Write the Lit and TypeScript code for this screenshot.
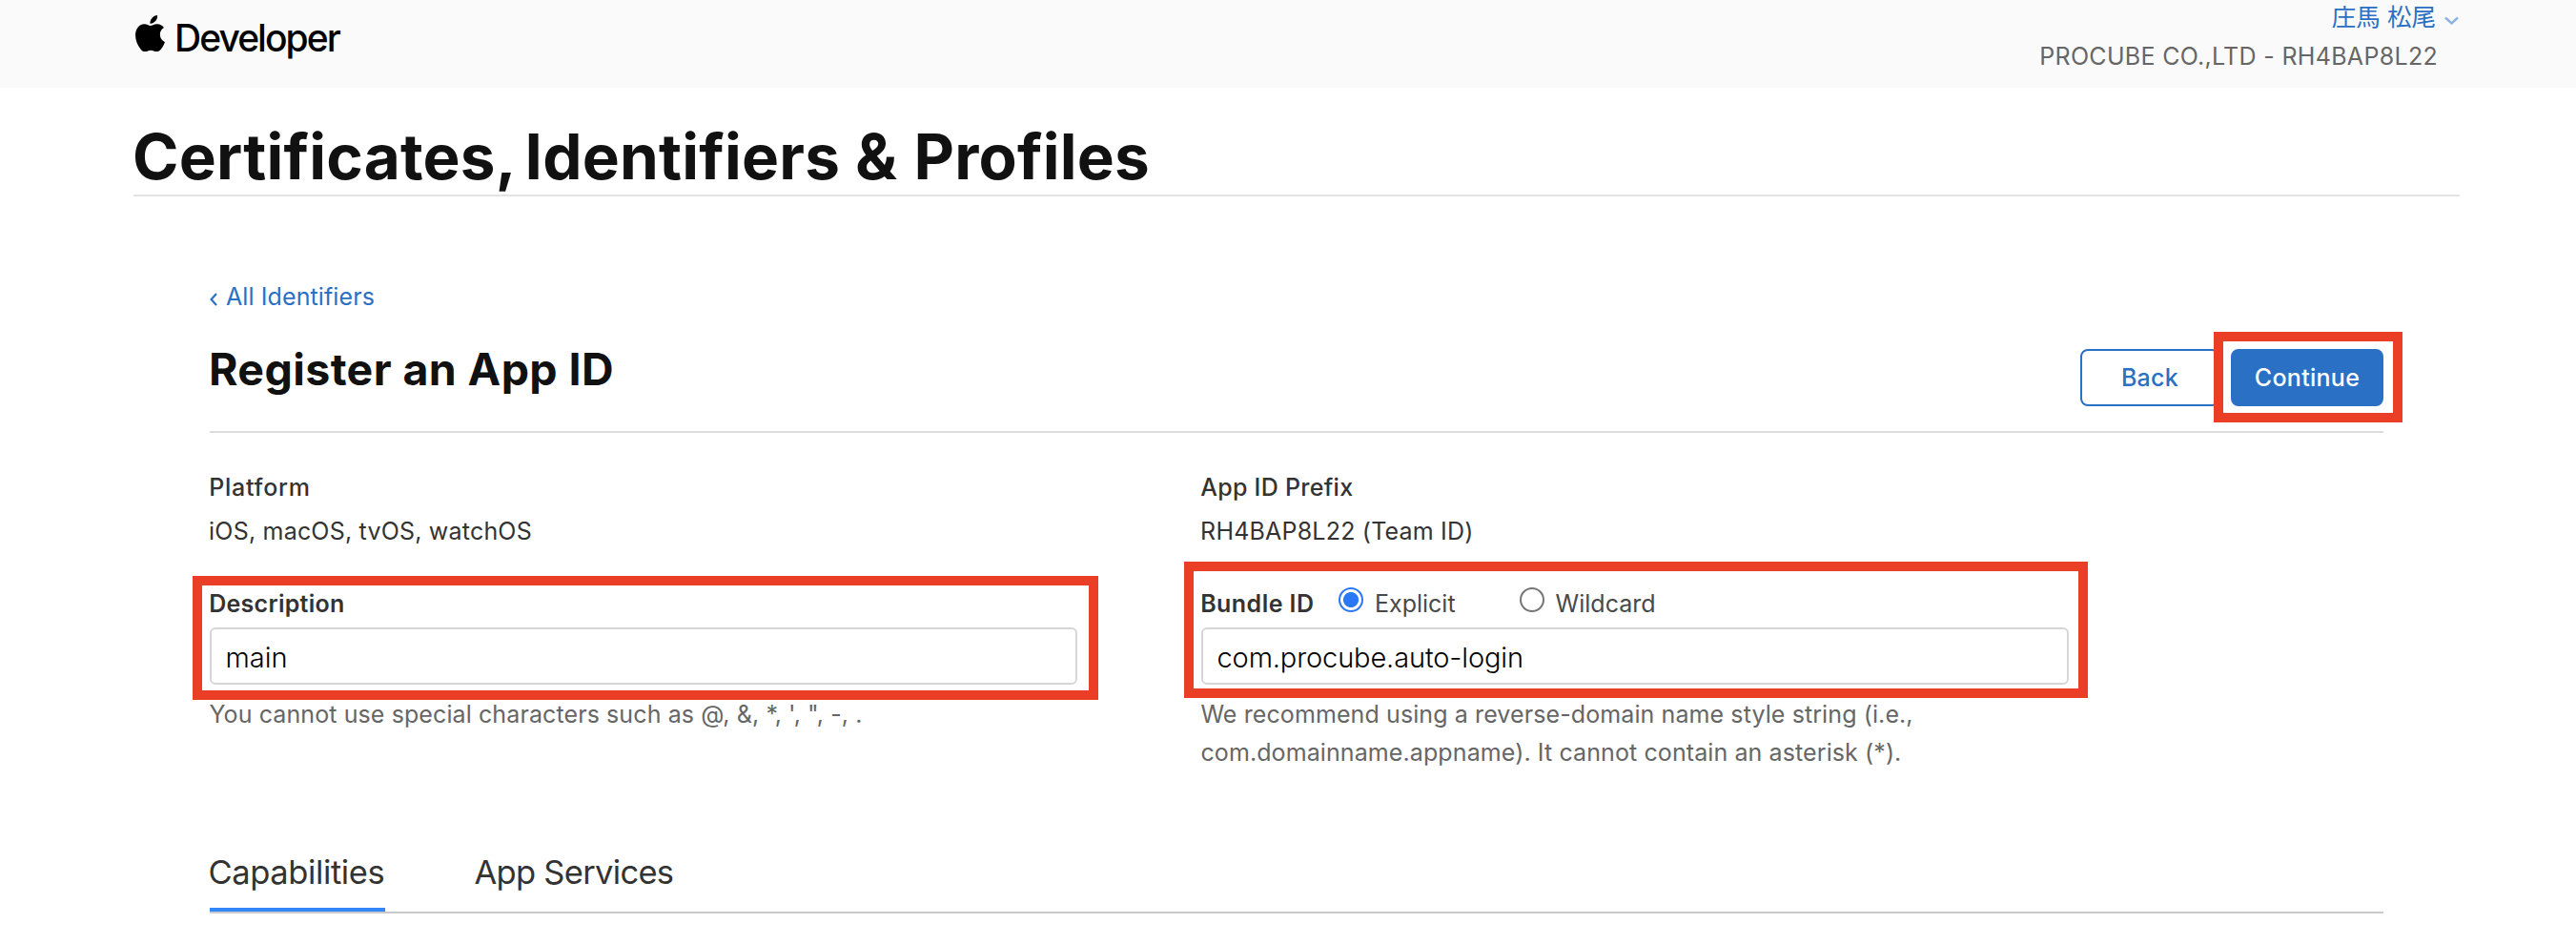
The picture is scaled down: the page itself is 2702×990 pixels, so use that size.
import { LitElement, html, css } from "lit";
import { customElement, property, state } from "lit/decorators.js";

@customElement("site-header")
class SiteHeader extends LitElement {
  static styles = css`
    :host { display: block; background: #fafafa; height: 92px; }
    .bar { display: flex; justify-content: space-between; width: 2438px; margin-left: 142px; }
    .brand { display: flex; align-items: flex-start; gap: 10px; color: #000; }
    .logo { width: 31px; height: 38.3px; margin-top: 16px; }
    .name { font-size: 39px; line-height: 40px; font-weight: 500; letter-spacing: -1.95px; margin-top: 20px; }
    .account { display: flex; flex-direction: column; align-items: flex-end; gap: 3px; }
    .user { display: flex; align-items: flex-start; gap: 9px; color: #2a70c4; font-size: 25.5px; line-height: 36px; }
    .chevron { width: 15px; height: 9px; margin: 17px 1px 0 0; }
    .team { font-size: 25px; line-height: 40px; letter-spacing: 0.31px; color: #666; margin-right: 23px; }
  `;
  render() {
    return html`
      <div class="bar">
        <div class="brand">
          <svg class="logo" viewBox="2.2 0 19.6 24" preserveAspectRatio="none">
            <path d="M12.152 6.896c-.948 0-2.415-1.078-3.96-1.04-2.04.027-3.91 1.183-4.961 3.014-2.117 3.675-.546 9.103 1.519 12.09 1.013 1.454 2.208 3.09 3.792 3.039 1.52-.065 2.09-.987 3.935-.987 1.831 0 2.35.987 3.96.948 1.637-.026 2.676-1.48 3.676-2.948 1.156-1.688 1.636-3.325 1.662-3.415-.039-.013-3.182-1.221-3.22-4.857-.026-3.04 2.48-4.494 2.597-4.559-1.429-2.09-3.623-2.324-4.39-2.376-2-.156-3.675 1.09-4.61 1.09zM15.53 3.83c.843-1.012 1.4-2.427 1.245-3.83-1.207.052-2.662.805-3.532 1.818-.78.896-1.454 2.338-1.273 3.714 1.338.104 2.715-.688 3.559-1.701" />
          </svg>
          <div class="name">Developer</div>
        </div>
        <div class="account">
          <div class="user">
            <span>庄馬 松尾</span>
            <svg class="chevron" viewBox="0 0 15 9"><path d="M1 1.5 7.5 7.5 14 1.5" fill="none" stroke="#8fb3e0" stroke-width="2.4" /></svg>
          </div>
          <div class="team">PROCUBE CO.,LTD - RH4BAP8L22</div>
        </div>
      </div>
    `;
  }
}

@customElement("callout-frame")
class CalloutFrame extends LitElement {
  static styles = css`
    :host { position: absolute; box-sizing: border-box; border: 10px solid #eb3e26; pointer-events: none; }
  `;
  render() {
    return html``;
  }
}

@customElement("tab-strip")
class TabStrip extends LitElement {
  @property({ attribute: false }) tabs: string[] = [];
  @state() private active = 0;
  static styles = css`
    :host { display: block; }
    .strip { display: flex; gap: 94px; border-bottom: 2px solid #cacaca; }
    .tab { font-size: 34.5px; line-height: 50px; letter-spacing: -0.4px; color: #333; padding-bottom: 12px; border-bottom: 4px solid transparent; white-space: nowrap; }
    .tab:first-child { width: 184px; text-indent: -1.5px; }
    .tab + .tab { letter-spacing: -0.7px; text-indent: -0.6px; }
    .active { border-bottom-color: #3586f7; }
  `;
  render() {
    return html`<div class="strip">
      ${this.tabs.map(
        (t, i) => html`<div class="tab ${i === this.active ? "active" : ""}" @click=${() => (this.active = i)}>${t}</div>`
      )}
    </div>`;
  }
}

@customElement("app-root")
class AppRoot extends LitElement {
  static styles = css`
    :host {
      display: block; min-height: 990px; background: #fff; color: #333;
      font-family: Inter, "Noto Sans CJK JP", sans-serif; font-size: 25px;
    }
    .page { width: 2440px; margin-left: 140px; }
    .title { margin: 0; padding-top: 32px; font-size: 65.6px; line-height: 80px; font-weight: 700; letter-spacing: 0.2px; color: #111; border-bottom: 2px solid #e3e3e3; text-indent: -1px; }
    .lead { margin-right: -7px; }
    .amp { margin-right: 1.5px; }
    .content { padding: 85px 80px 0; }
    .back-link { display: flex; gap: 9px; color: #2a70c4; line-height: 40px; letter-spacing: 0.1px; }
    .back-icon { width: 8px; height: 14px; margin-top: 15.5px; }
    .head { display: flex; justify-content: space-between; height: 121px; border-bottom: 2px solid #dcdcdc; }
    .heading { margin: 26px 0 0 -1px; font-size: 46.5px; line-height: 60px; font-weight: 700; letter-spacing: 0.39px; color: #111; }
    .actions { display: flex; gap: 12px; margin-top: 35px; }
    .btn { box-sizing: border-box; height: 60px; border: 2px solid #2a70c4; border-radius: 8px; font: 500 25px/54px Inter, sans-serif; letter-spacing: 0.28px; padding: 0; text-align: center; }
    .secondary { width: 146px; color: #2a70c4; background: #fff; }
    .primary { width: 160px; color: #fff; background: #2a70c4; }
    .primary-wrap { position: relative; height: 60px; }
    .primary-frame { left: -18px; top: -18px; width: 198px; height: 95px; }
    .grid { display: grid; grid-template-columns: 910px 910px; column-gap: 130px; row-gap: 30px; padding-top: 34px; }
    .label { line-height: 46px; font-weight: 500; letter-spacing: 0.28px; text-indent: -0.8px; }
    .platform { letter-spacing: 0.75px; }
    .value { line-height: 46px; letter-spacing: 0.2px; text-indent: -0.9px; }
    .strong { font-weight: 600; }
    .bundle { letter-spacing: 0.44px; width: 144px; }
    .field { position: relative; }
    .row { display: flex; align-items: flex-start; height: 46px; margin-bottom: 2px; }
    .desc-frame { left: -18px; top: -6px; width: 950px; height: 130px; }
    .bundle-frame { left: -18px; top: -21px; width: 948px; height: 143px; }
    .input { display: block; box-sizing: border-box; width: 910px; height: 60px; margin: 0; border: 2px solid #d6d6d6; border-radius: 6px; padding: 2px 14.5px 0; font: 350 29px Inter, sans-serif; color: #000; background: #fff; outline: none; }
    .dotted { letter-spacing: -0.13px; }
    .hint { margin: 11px 0 0 -0.6px; line-height: 40px; color: #666; letter-spacing: 0.1px; width: 780px; }
    .option { display: flex; color: #494949; line-height: 46px; gap: 12px; }
    .option + .option { margin-left: 67px; }
    .radio { appearance: none; box-sizing: border-box; width: 26px; height: 26px; margin: 6px 0 0; border: 2px solid #767676; border-radius: 50%; background: #fff; }
    .radio:checked { border-color: #2a78f6; background: radial-gradient(circle, #2a78f6 7.6px, #fff 8.4px); }
    .tabs { margin-top: 81px; }
  `;
  render() {
    return html`
      <site-header></site-header>
      <main class="page">
        <h1 class="title"><span class="lead">Certificates,</span> Identifiers <span class="amp">&amp;</span> Profiles</h1>
        <div class="content">
          <div class="back-link">
            <svg class="back-icon" viewBox="0 0 8 14"><path d="M7 1 1.6 7 7 13" fill="none" stroke="#2a70c4" stroke-width="2.2" /></svg>
            <span>All Identifiers</span>
          </div>
          <div class="head">
            <h2 class="heading">Register an App ID</h2>
            <div class="actions">
              <button class="btn secondary">Back</button>
              <div class="primary-wrap">
                <button class="btn primary">Continue</button>
                <callout-frame class="primary-frame"></callout-frame>
              </div>
            </div>
          </div>
          <div class="grid">
            <div>
              <div class="label platform">Platform</div>
              <div class="value">iOS, macOS, tvOS, watchOS</div>
            </div>
            <div>
              <div class="label">App ID Prefix</div>
              <div class="value">RH4BAP8L22 (Team ID)</div>
            </div>
            <div class="field">
              <div class="row"><div class="label strong">Description</div></div>
              <input class="input" .value=${"main"} />
              <div class="hint">You cannot use special characters such as @, &amp;, *, ', ", -, .</div>
              <callout-frame class="desc-frame"></callout-frame>
            </div>
            <div class="field">
              <div class="row">
                <div class="label strong bundle">Bundle ID</div>
                <label class="option"><input class="radio" type="radio" name="kind" checked />Explicit</label>
                <label class="option"><input class="radio" type="radio" name="kind" />Wildcard</label>
              </div>
              <input class="input dotted" .value=${"com.procube.auto-login"} />
              <div class="hint">We recommend using a reverse-domain name style string (i.e., com.domainname.appname). It cannot contain an asterisk (*).</div>
              <callout-frame class="bundle-frame"></callout-frame>
            </div>
          </div>
          <tab-strip class="tabs" .tabs=${["Capabilities", "App Services"]}></tab-strip>
        </div>
      </main>
    `;
  }
}
